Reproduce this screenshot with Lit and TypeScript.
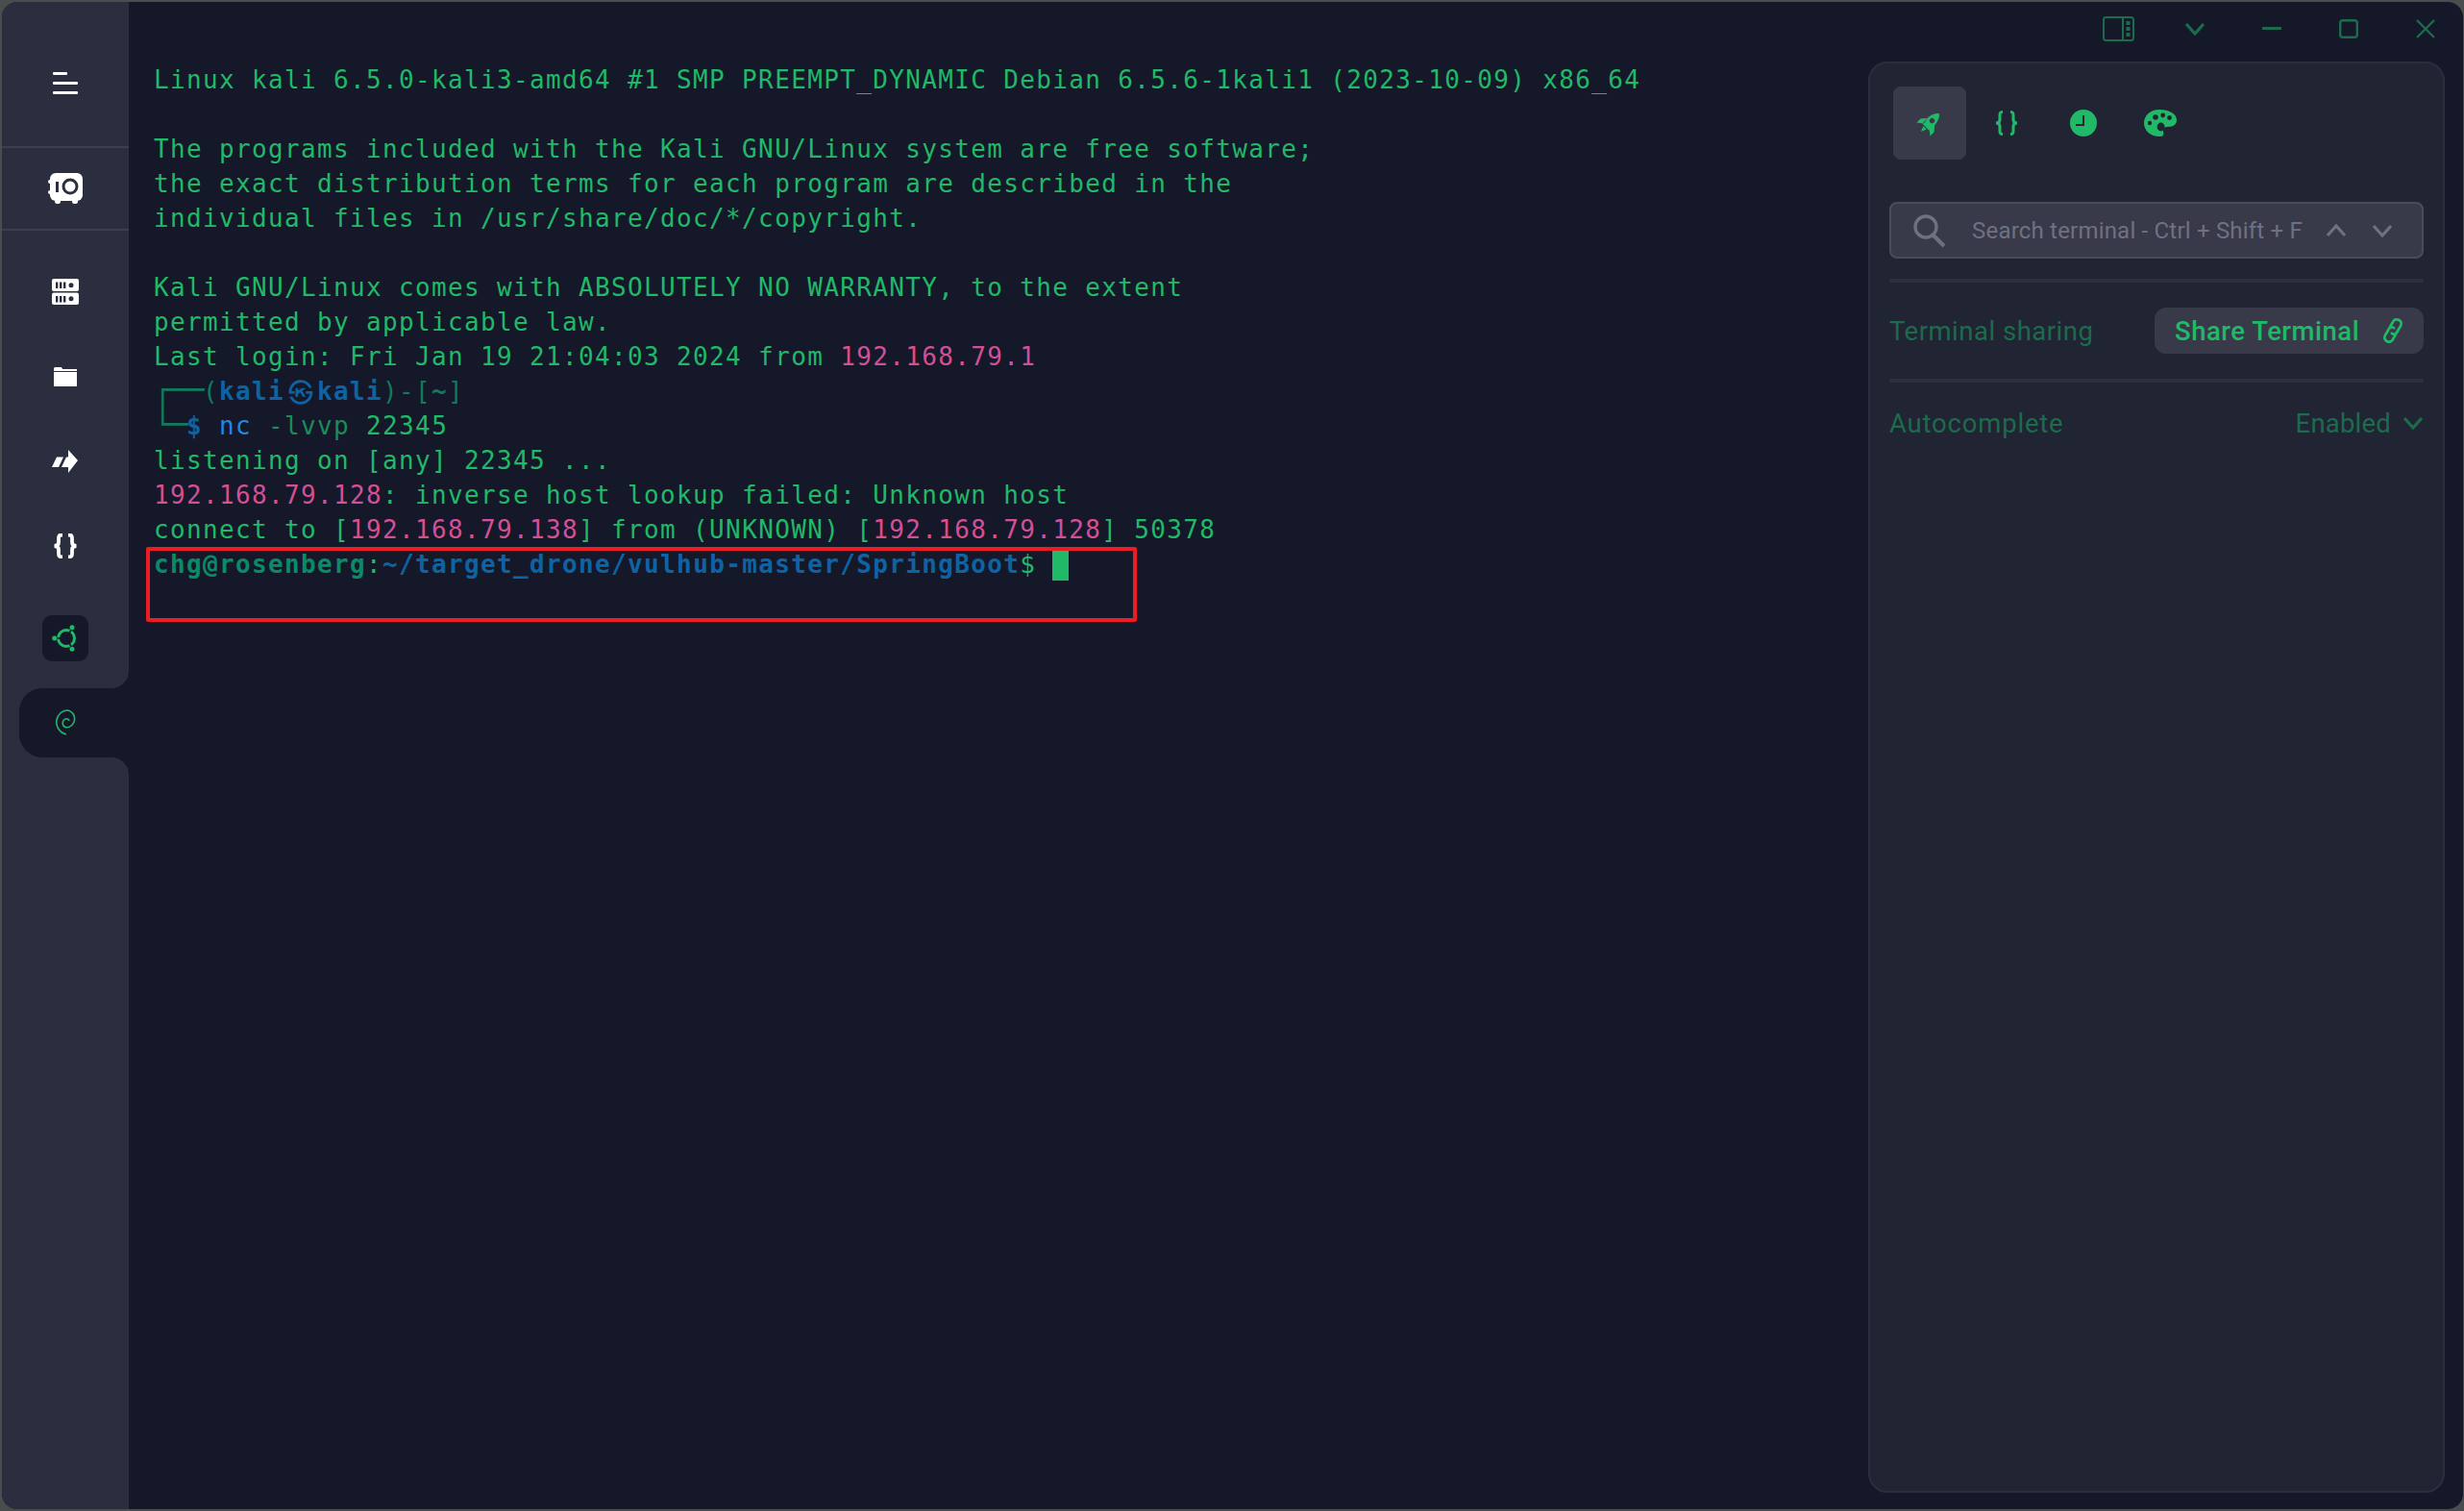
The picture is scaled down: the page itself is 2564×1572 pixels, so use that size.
import { LitElement, html, css } from "lit";
import { customElement } from "lit/decorators.js";

const chev = (d: string) => html`<svg class="chev" width="22" height="14" viewBox="0 0 22 14"><path d=${d} fill="none" stroke="currentColor" stroke-width="3.2"/></svg>`;
const DOWN = "M2 2 L11 12 L20 2";
const UP = "M2 12 L11 2 L20 12";

const icons = {
  menu: html`<svg width="28" height="24" viewBox="0 0 28 24"><g fill="#fff"><rect x="1" y="0" width="15" height="3" rx="1"/><rect x="1" y="10" width="26" height="3" rx="1"/><rect x="1" y="20" width="26" height="3" rx="1"/></g></svg>`,
  safe: html`<svg width="38" height="34" viewBox="0 0 38 34"><g fill="#fff"><rect x="3" y="1" width="34" height="29" rx="6"/><rect x="1" y="8" width="4" height="4" rx="2"/><rect x="1" y="19" width="4" height="4" rx="2"/><rect x="8" y="28" width="6" height="5" rx="2.5"/><rect x="26" y="28" width="6" height="5" rx="2.5"/></g><circle cx="24" cy="15" r="7" fill="none" stroke="#2b2e3f" stroke-width="3"/><rect x="9" y="10" width="3" height="11" fill="#2b2e3f"/></svg>`,
  servers: html`<svg width="28" height="28" viewBox="0 0 28 28"><g fill="#fff"><rect x="0" y="0" width="28" height="13" rx="2"/><rect x="0" y="14.5" width="28" height="12.5" rx="2"/></g><g fill="#2b2e3f"><rect x="4" y="3.5" width="2.4" height="6.5"/><rect x="8" y="3.5" width="2.4" height="6.5"/><rect x="12" y="3.5" width="2.4" height="6.5"/><circle cx="20" cy="6.8" r="2.5"/><rect x="4" y="18" width="2.4" height="6.5"/><rect x="8" y="18" width="2.4" height="6.5"/><rect x="12" y="18" width="2.4" height="6.5"/><circle cx="20" cy="20.8" r="2.5"/></g></svg>`,
  folder: html`<svg width="24" height="20" viewBox="0 0 24 20"><path fill="#fff" d="M0 2 C0 .6 .6 0 2 0 H7 C8 0 8.5 .5 9 2 H24 V4 H0Z M0 5 H24 V20 H0Z"/></svg>`,
  forward: html`<svg width="28" height="24" viewBox="0 0 28 24"><path fill="#fff" d="M5 7.5 H12 L7 18 H0Z M15 7.5 H17 V0 L27 11 L17 24 V18 H10Z"/></svg>`,
  braces: html`<svg width="26" height="26" viewBox="0 0 26 26"><path fill="none" stroke="#fff" stroke-width="3.8" d="M10 1.5 C6 1.5 6 3 6 5.5 V9 C6 12 4 13 1.5 13 C4 13 6 14 6 17 V20.5 C6 23 6 24.5 10 24.5 M16 1.5 C20 1.5 20 3 20 5.5 V9 C20 12 22 13 24.5 13 C22 13 20 14 20 17 V20.5 C20 23 20 24.5 16 24.5"/></svg>`,
  ubuntu: html`<svg width="28" height="28" viewBox="0 0 28 28"><circle cx="15" cy="14" r="8.5" fill="none" stroke="#20b968" stroke-width="3"/><g stroke="#141829" stroke-width="1.6"><path d="M4 14 H9"/><path d="M21 4 L17.5 9.5"/><path d="M21 24 L17.5 18.5"/></g><g fill="#20b968"><circle cx="2.7" cy="14" r="2.5"/><circle cx="21" cy="2.7" r="2.5"/><circle cx="21" cy="25.3" r="2.5"/></g></svg>`,
  debian: html`<svg width="22" height="28" viewBox="0 0 22 28"><path fill="none" stroke="#20b968" stroke-width="1.6" d="M12 26 C4 24 1 17 2 11 C3 5 8 1 13 1 C19 2 22 8 20 13 C18 18 13 20 10 18 C7 16 8 11 11 10 C13 9 15 11 15 12"/></svg>`,
  panelToggle: html`<svg width="33" height="26" viewBox="0 0 33 26"><rect x="1" y="1" width="31" height="24" rx="2.5" fill="none" stroke="currentColor" stroke-width="2"/><path d="M21 1 V25" stroke="currentColor" stroke-width="2"/><g fill="currentColor"><rect x="24.5" y="5" width="4" height="4"/><rect x="24.5" y="11" width="4" height="4"/><rect x="24.5" y="17" width="4" height="4"/></g></svg>`,
  minus: html`<svg width="20" height="4" viewBox="0 0 20 4"><rect width="20" height="3" rx="1" fill="currentColor"/></svg>`,
  square: html`<svg width="20" height="20" viewBox="0 0 20 20"><rect x="1.2" y="1.2" width="17.6" height="17.6" rx="2.5" fill="none" stroke="currentColor" stroke-width="2.4"/></svg>`,
  close: html`<svg width="20" height="20" viewBox="0 0 20 20"><path d="M1 1 L19 19 M19 1 L1 19" fill="none" stroke="currentColor" stroke-width="2.4"/></svg>`,
  rocket: html`<svg width="28" height="28" viewBox="0 0 24 24"><g transform="rotate(45 12 12)"><path fill="#20b968" d="M12 0 C16 3 17.5 9 16 17 H8 C6.5 9 8 3 12 0Z M7.6 10 L3.5 15 V20 L8.5 16Z M16.4 10 L20.5 15 V20 L15.5 16Z M10 18 H14 L12 23Z"/><circle cx="12" cy="9" r="2.3" fill="#383a4a"/></g></svg>`,
  tabBraces: html`<svg width="26" height="26" viewBox="0 0 26 26"><path fill="none" stroke="#20b968" stroke-width="3" d="M9 1.5 C6 1.5 6 3 6 5.5 V9.5 C6 12 4.5 13 2 13 C4.5 13 6 14 6 16.5 V20.5 C6 23 6 24.5 9 24.5 M17 1.5 C20 1.5 20 3 20 5.5 V9.5 C20 12 21.5 13 24 13 C21.5 13 20 14 20 16.5 V20.5 C20 23 20 24.5 17 24.5"/></svg>`,
  clock: html`<svg width="28" height="28" viewBox="0 0 28 28"><circle cx="14" cy="14" r="14" fill="#20b968"/><path d="M14 6 V16 H6" fill="none" stroke="#202433" stroke-width="2"/></svg>`,
  palette: html`<svg width="34" height="28" viewBox="0 0 34 28"><path fill="#20b968" fill-rule="evenodd" d="M16 0 C7 0 0 6 0 14 C0 22 7 28 16 28 C20 28 21 26 20 23 C19 20 21 18 25 18 C31 18 34 15 34 11 C34 4 26 0 16 0Z"/><g fill="#202433"><circle cx="6" cy="14" r="2.2"/><circle cx="12" cy="8" r="2.8"/><circle cx="19.7" cy="6" r="2.4"/><circle cx="26.5" cy="8.5" r="2.4"/><ellipse cx="17.6" cy="18" rx="4" ry="4.4"/></g></svg>`,
  search: html`<svg width="36" height="36" viewBox="0 0 36 36"><circle cx="14" cy="14" r="11" fill="none" stroke="#6f7180" stroke-width="3.4"/><path d="M22 23 L33 34" stroke="#6f7180" stroke-width="4"/></svg>`,
  link: html`<svg width="26" height="30" viewBox="0 0 26 30"><g transform="rotate(30 13 15)" fill="none" stroke="#20b968" stroke-width="2.8"><path d="M8.5 13 V6.5 C8.5 1 17.5 1 17.5 6.5 V15 C17.5 18 13.5 19 13 17"/><path d="M17.5 17 V23.5 C17.5 29 8.5 29 8.5 23.5 V15 C8.5 12 12.5 11 13 13"/></g></svg>`,
};

const lines = [
  html`Linux kali 6.5.0-kali3-amd64 #1 SMP PREEMPT_DYNAMIC Debian 6.5.6-1kali1 (2023-10-09) x86_64`,
  html``,
  html`The programs included with the Kali GNU/Linux system are free software;`,
  html`the exact distribution terms for each program are described in the`,
  html`individual files in /usr/share/doc/*/copyright.`,
  html``,
  html`Kali GNU/Linux comes with ABSOLUTELY NO WARRANTY, to the extent`,
  html`permitted by applicable law.`,
  html`Last login: Fri Jan 19 21:04:03 2024 from <span class="pink">192.168.79.1</span>`,
  html`<span class="teal box">┌──</span><span class="teal">(</span><b class="blue">kali<span class="skull">㉿</span>kali</b><span class="teal">)-[</span><b class="teal">~</b><span class="teal">]</span>`,
  html`<span class="teal box">└─</span><b class="blue">$</b> <span class="cmd">nc</span> <span class="dim">-lvvp</span> 22345`,
  html`listening on [any] 22345 ...`,
  html`<span class="pink">192.168.79.128</span>: inverse host lookup failed: Unknown host`,
  html`connect to [<span class="pink">192.168.79.138</span>] from (UNKNOWN) [<span class="pink">192.168.79.128</span>] 50378`,
  html`<b class="teal2">chg@rosenberg</b>:<b class="blue">~/target_drone/vulhub-master/SpringBoot</b>$ <span class="cursor"></span>`,
];

@customElement("app-root")
export class AppRoot extends LitElement {
  static styles = css`
    :host { display: block; width: 2564px; height: 1572px; background: #4a4d4d; overflow: hidden; }
    * { box-sizing: border-box; }
    .window { display: flex; height: 1568px; margin: 2px 1px 2px 2px; width: 2561px; background: #141829; border-radius: 16px; overflow: hidden; }

    .sidebar { width: 132px; flex: none; display: flex; flex-direction: column; }
    .s-head { height: 150px; display: flex; align-items: center; justify-content: center; padding-top: 19px; background: #2b2e3f; }
    .s-safe { height: 88px; display: flex; align-items: center; justify-content: center; background: #2b2e3f; border-top: 2px solid #3c3f50; border-bottom: 2px solid #3c3f50; }
    .s-list { background: #2b2e3f; padding: 20px 0 28px; border-bottom-right-radius: 18px; display: flex; flex-direction: column; align-items: center; }
    .s-item { height: 88px; width: 100%; display: flex; align-items: center; justify-content: center; }
    .s-tile { width: 48px; height: 48px; margin-top: 28px; border-radius: 10px; background: #141829; display: flex; align-items: center; justify-content: center; }
    .s-tabwrap { height: 72px; background: #2b2e3f; padding-left: 18px; }
    .s-tab { height: 100%; background: #141829; border-radius: 24px 0 0 24px; display: flex; align-items: center; justify-content: center; padding-right: 18px; }
    .s-rest { flex: 1; background: #2b2e3f; border-top-right-radius: 18px; }

    .terminal { flex: 1; position: relative; padding: 63px 0 0 26px; font: 26px/36px "DejaVu Sans Mono", monospace; letter-spacing: 1.35px; color: #20b968; }
    .row { height: 36px; white-space: pre; }
    .pink { color: #d44f94; }
    .teal { color: #127a5c; }
    .teal2 { color: #0b8a68; }
    .blue { color: #0d63a3; }
    .cmd { color: #1e88e5; }
    .dim { color: #1c8a5a; }
    .box { font-size: 31px; line-height: 0; letter-spacing: -1.66px; }
    .skull { display: inline-block; width: 34px; letter-spacing: 0; font: 26px/36px "Noto Sans CJK KR", sans-serif; text-align: center; vertical-align: top; }
    .cursor { display: inline-block; width: 17px; height: 34px; background: #20b968; vertical-align: top; margin-top: 1px; }
    .redbox { position: absolute; left: 18px; top: 567px; width: 1031px; height: 78px; border: 4px solid #ed1c24; border-radius: 2px; }

    .right { width: 619px; flex: none; display: flex; flex-direction: column; font-family: Roboto, sans-serif; }
    .controls { height: 62px; display: flex; justify-content: flex-end; color: #1c6b4c; flex: none; margin-right: -1px; }
    .ctl { width: 80px; height: 56px; display: flex; align-items: center; justify-content: center; }
    .panel { flex: 1; margin: 0 19px 17px 0; background: #202433; border: 2px solid #2b2e3d; border-radius: 20px; padding: 24px 20px 0; display: flex; flex-direction: column; }
    .tabs { display: flex; gap: 4px; height: 76px; margin-left: 4px; }
    .tab { width: 76px; height: 76px; display: flex; align-items: center; justify-content: center; border-radius: 8px; }
    .tab.on { background: #383a4a; }
    .search { margin-top: 44px; height: 59px; display: flex; align-items: center; background: #383a4a; border: 2px solid #494c5a; border-radius: 8px; color: #6f7180; padding-left: 22px; font-size: 24px; }
    .search .txt { margin-left: 26px; width: 368px; white-space: nowrap; letter-spacing: .2px; }
    .search .c { display: flex; gap: 26px; }
    .divider { height: 4px; background: #2b2e3d; flex: none; }
    .setrow { display: flex; justify-content: space-between; align-items: center; font-size: 27.5px; letter-spacing: .5px; color: #1c6b4c; }
    .share-row { height: 100px; }
    .auto-row { height: 84px; letter-spacing: .8px; }
    .auto-row .en { letter-spacing: .2px; }
    .share { width: 280px; height: 48px; background: #383a4a; border-radius: 12px; display: flex; align-items: center; padding-left: 21px; gap: 22px; color: #20b968; font-weight: 500; }
    .en { display: flex; align-items: center; gap: 12px; }
    .d1 { margin-top: 21px; }
  `;

  render() {
    return html`<div class="window">
      <nav class="sidebar">
        <div class="s-head">${icons.menu}</div>
        <div class="s-safe">${icons.safe}</div>
        <div class="s-list">
          <div class="s-item">${icons.servers}</div>
          <div class="s-item">${icons.folder}</div>
          <div class="s-item">${icons.forward}</div>
          <div class="s-item">${icons.braces}</div>
          <div class="s-tile">${icons.ubuntu}</div>
        </div>
        <div class="s-tabwrap"><div class="s-tab">${icons.debian}</div></div>
        <div class="s-rest"></div>
      </nav>
      <main class="terminal">
        ${lines.map((l) => html`<div class="row">${l}</div>`)}
        <div class="redbox"></div>
      </main>
      <aside class="right">
        <div class="controls">
          <div class="ctl">${icons.panelToggle}</div>
          <div class="ctl">${chev(DOWN)}</div>
          <div class="ctl">${icons.minus}</div>
          <div class="ctl">${icons.square}</div>
          <div class="ctl">${icons.close}</div>
        </div>
        <section class="panel">
          <div class="tabs">
            <div class="tab on">${icons.rocket}</div>
            <div class="tab">${icons.tabBraces}</div>
            <div class="tab">${icons.clock}</div>
            <div class="tab">${icons.palette}</div>
          </div>
          <div class="search">
            ${icons.search}
            <span class="txt">Search terminal - Ctrl + Shift + F</span>
            <span class="c">${chev(UP)}${chev(DOWN)}</span>
          </div>
          <div class="divider d1"></div>
          <div class="setrow share-row">
            <span>Terminal sharing</span>
            <div class="share"><span>Share Terminal</span>${icons.link}</div>
          </div>
          <div class="divider"></div>
          <div class="setrow auto-row">
            <span>Autocomplete</span>
            <span class="en">Enabled ${chev(DOWN)}</span>
          </div>
        </section>
      </aside>
    </div>`;
  }
}
